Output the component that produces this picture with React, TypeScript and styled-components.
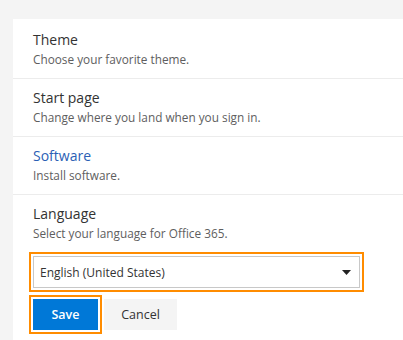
import React from "react";
import styled, { createGlobalStyle } from "styled-components";

const GlobalStyle = createGlobalStyle`
  html, body {
    margin: 0;
    padding: 0;
    background: #f4f4f4;
    font-family: "Open Sans", "Noto Sans", sans-serif;
  }
`;

const sections = [
  { title: "Theme", text: "Choose your favorite theme." },
  { title: "Start page", text: "Change where you land when you sign in." },
  { title: "Software", text: "Install software.", link: true },
];

const App: React.FC = () => {
  return (
    <>
      <GlobalStyle />
      <Page>
        <Panel>
          {sections.map((item, index) => (
            <Row key={index}>
              <Title $link={item.link}>{item.title}</Title>
              <Sub>{item.text}</Sub>
            </Row>
          ))}
          <Row $last>
            <Title>Language</Title>
            <Sub>Select your language for Office 365.</Sub>
            <SelectBox>
              <span>English (United States)</span>
              <svg width="9" height="5" viewBox="0 0 9 5">
                <path d="M0 0h9L4.5 5z" fill="#222" />
              </svg>
            </SelectBox>
            <Actions>
              <Button $primary>Save</Button>
              <Button>Cancel</Button>
            </Actions>
          </Row>
        </Panel>
      </Page>
    </>
  );
};

export default App;

const Page = styled.div`
  padding: 19px 0 0 13px;
  height: 340px;
  box-sizing: border-box;
  overflow: hidden;
`;

const Panel = styled.div`
  background: #fff;
  padding: 2px 0 0 20px;
  min-height: 330px;
`;

const Row = styled.div<{ $last?: boolean }>`
  padding: 9px 0 ${({ $last }) => ($last ? "0" : "10px")};
  border-bottom: ${({ $last }) => ($last ? "none" : "1px solid #ececec")};
  margin-left: -20px;
  padding-left: 20px;
`;

const Title = styled.div<{ $link?: boolean }>`
  font-size: 14px;
  line-height: 20px;
  color: ${({ $link }) => ($link ? "#2b5fb5" : "#333")};
`;

const Sub = styled.div`
  font-size: 11.8px;
  line-height: 18px;
  color: #5e5e5e;
`;

const SelectBox = styled.div`
  margin-top: 14px;
  width: 327px;
  height: 32px;
  box-sizing: border-box;
  border: 1px solid #c8c8c8;
  outline: 2px solid #ff8c00;
  outline-offset: 2px;
  display: flex;
  align-items: center;
  justify-content: space-between;
  padding: 0 8px 0 6px;
  font-size: 12px;
  color: #333;
`;

const Actions = styled.div`
  display: flex;
  gap: 6px;
  margin-top: 11px;
`;

const Button = styled.button<{ $primary?: boolean }>`
  height: 31px;
  width: ${({ $primary }) => ($primary ? "65px" : "73px")};
  border: none;
  font-family: inherit;
  font-size: 12.5px;
  font-weight: ${({ $primary }) => ($primary ? 600 : 400)};
  background: ${({ $primary }) => ($primary ? "#0078d7" : "#f4f4f4")};
  color: ${({ $primary }) => ($primary ? "#fff" : "#333")};
  outline: ${({ $primary }) => ($primary ? "2px solid #ff8c00" : "none")};
  outline-offset: 2px;
  padding: 0;
`;
